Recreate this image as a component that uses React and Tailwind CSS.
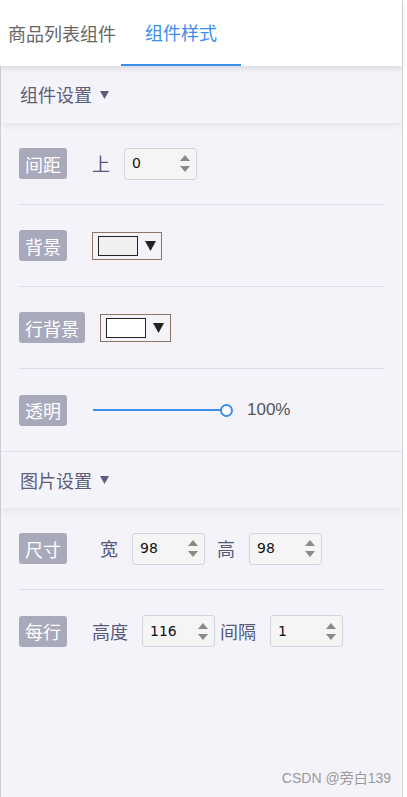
import React from "react";

const cjk = { fontFamily: '"Noto Sans CJK SC", "Noto Sans", sans-serif' };

function Badge({ children }) {
  return (
    <span className="inline-flex h-[31px] items-center rounded-[3px] bg-[#a9a9bc] px-[6px] text-[18px] leading-none text-white" style={cjk}>
      {children}
    </span>
  );
}

function Spinner() {
  return (
    <div className="flex flex-col items-center gap-[5px]">
      <svg width="10" height="6" viewBox="0 0 10 6"><path d="M0 6 L5 0 L10 6 Z" fill="#8a8a8a" /></svg>
      <svg width="10" height="6" viewBox="0 0 10 6"><path d="M0 0 L10 0 L5 6 Z" fill="#8a8a8a" /></svg>
    </div>
  );
}

function NumInput({ value, className = "" }) {
  return (
    <div className={"flex h-[32px] w-[73px] items-center justify-between rounded-[3px] border border-[#cfd6de] bg-[#f5f5f6] pl-[7px] pr-[6px] " + className}>
      <span className="text-[14px] text-[#111]" style={{ fontFamily: '"DejaVu Sans", sans-serif' }}>{value}</span>
      <Spinner />
    </div>
  );
}

function ColorPick({ fill, w }) {
  return (
    <div className={"flex h-[28px] items-center border border-[#8e7462] pl-[5px] " + w}>
      <div className="h-[20px] w-[40px] border border-[#222]" style={{ background: fill }} />
      <svg className="ml-[7px]" width="11" height="11" viewBox="0 0 11 11"><path d="M0 1 L11 1 L5.5 11 Z" fill="#222" /></svg>
    </div>
  );
}

function Row({ children, last }) {
  return (
    <div className={"flex h-[82px] items-center " + (last ? "" : "border-b border-[#dcdae6]")}>
      {children}
    </div>
  );
}

function Header({ title, top }) {
  return (
    <div className={"flex h-[57px] items-center bg-[#f4f3f9] pl-[19px] shadow-[0_3px_6px_rgba(0,0,0,0.06)] " + (top ? "border-t border-[#e2e1ea]" : "")} style={cjk}>
      <span className="text-[18px] text-[#5a5e7a]">{title}</span>
      <svg className="ml-[8px]" width="9" height="8" viewBox="0 0 9 8"><path d="M0 0 L9 0 L4.5 8 Z" fill="#5a5e7a" /></svg>
    </div>
  );
}

const lbl = "text-[18px] text-[#54587a]";

export default function App() {
  return (
    <div className="flex h-[797px] w-[407px] bg-white">
      <div className="flex h-full w-[403px] flex-col border-r border-[#d6d6de] bg-[#f4f3f9]">
        <div className="relative z-10 flex h-[66px] items-stretch bg-white shadow-[0_2px_6px_rgba(0,0,0,0.12)]" style={cjk}>
          <div className="flex items-center pl-[8px] pr-[5px] text-[18px] text-[#666]">商品列表组件</div>
          <div className="flex w-[120px] items-center justify-center border-b-2 border-[#3b8eea] text-[18px] text-[#3b8eea]">组件样式</div>
        </div>
        <div className="flex flex-1 flex-col border-l border-[#cfcfd8]">
          <Header title="组件设置" />
          <div className="ml-[18px] mr-[17px]" style={cjk}>
            <Row>
              <Badge>间距</Badge>
              <span className={lbl + " ml-[25px]"}>上</span>
              <NumInput value="0" className="ml-[14px]" />
            </Row>
            <Row>
              <Badge>背景</Badge>
              <ColorPick fill="#f0f0f0" w="ml-[25px] w-[70px]" />
            </Row>
            <Row>
              <Badge>行背景</Badge>
              <ColorPick fill="#ffffff" w="ml-[15px] w-[71px]" />
            </Row>
            <Row last>
              <Badge>透明</Badge>
              <div className="relative ml-[26px] flex h-[14px] w-[140px] items-center">
                <div className="h-[2px] w-[133px] bg-[#3b8eea]" />
                <div className="absolute left-[127px] top-[1px] h-[13px] w-[13px] rounded-full border-2 border-[#3b8eea] bg-white" />
              </div>
              <span className="ml-[14px] text-[17px] text-[#555]" style={{ fontFamily: '"Liberation Sans", Arial, sans-serif' }}>100%</span>
            </Row>
          </div>
          <Header title="图片设置" top />
          <div className="ml-[18px] mr-[17px]" style={cjk}>
            <Row>
              <Badge>尺寸</Badge>
              <span className={lbl + " ml-[33px]"}>宽</span>
              <NumInput value="98" className="ml-[14px]" />
              <span className={lbl + " ml-[12px]"}>高</span>
              <NumInput value="98" className="ml-[14px]" />
            </Row>
            <Row last>
              <Badge>每行</Badge>
              <span className={lbl + " ml-[25px]"}>高度</span>
              <NumInput value="116" className="ml-[14px]" />
              <span className={lbl + " ml-[5px]"}>间隔</span>
              <NumInput value="1" className="ml-[14px]" />
            </Row>
          </div>
          <div className="flex-1" />
          <div className="flex justify-end pb-[8px] pr-[11px] text-[14px] text-[#9a9a9a]" style={{ fontFamily: '"Liberation Sans", "Noto Sans CJK SC", sans-serif' }}>
            CSDN @旁白139
          </div>
        </div>
      </div>
    </div>
  );
}
